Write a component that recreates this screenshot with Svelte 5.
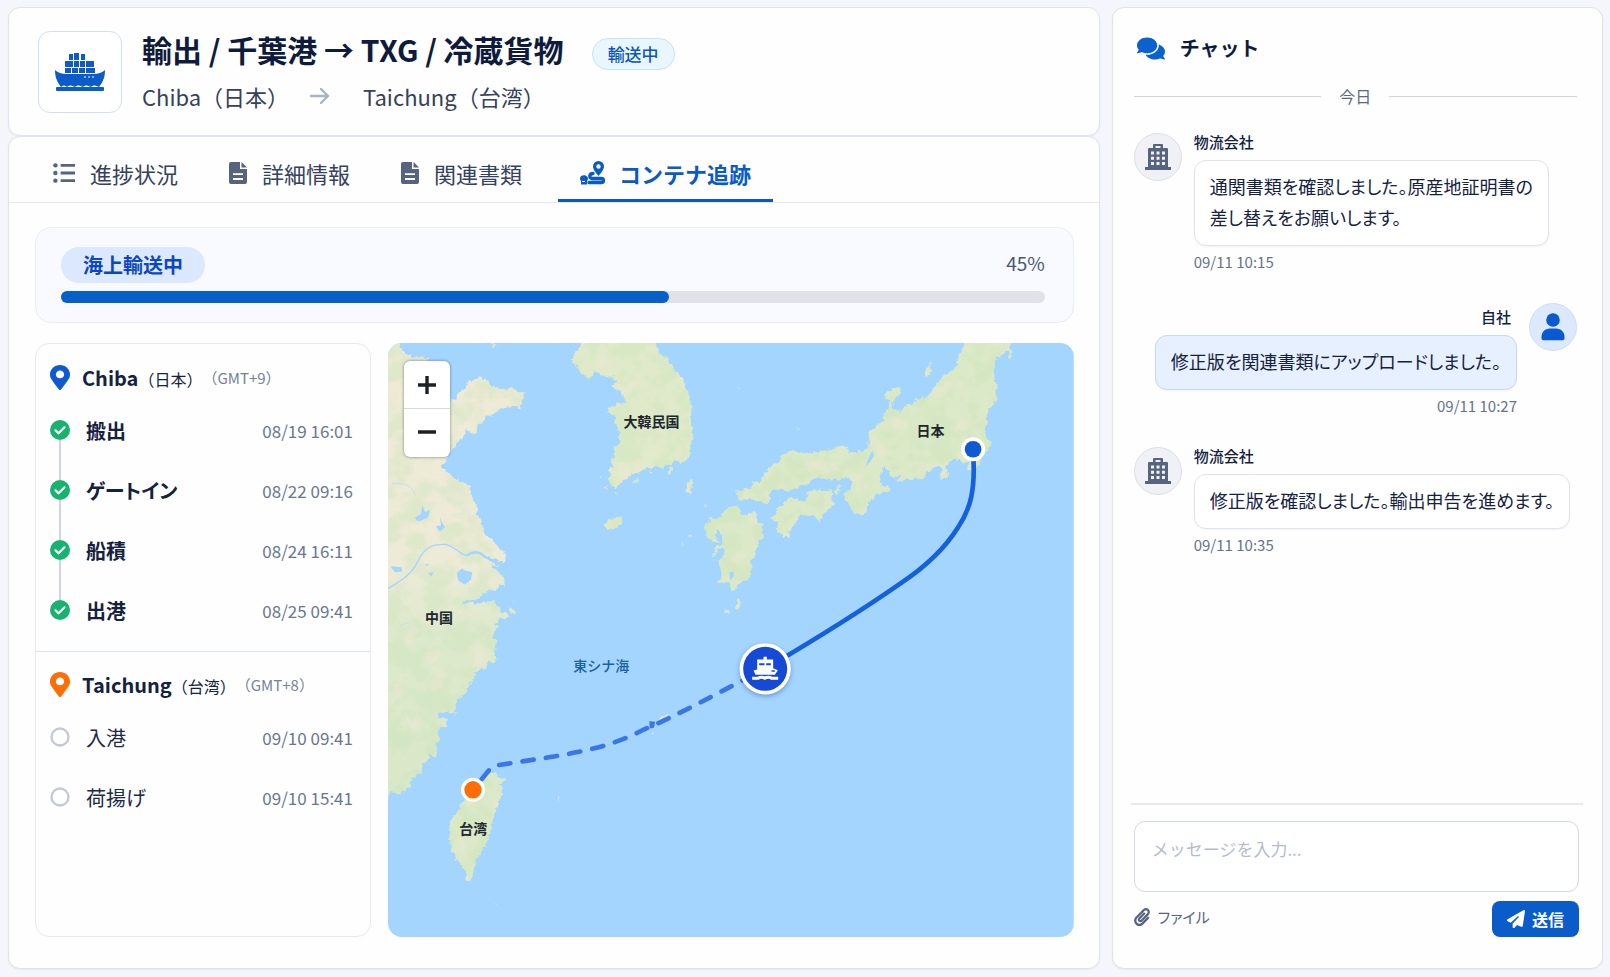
<script>
  let message = '';
  let activeTab = 'tracking';

  const progress = { label: '海上輸送中', text: '45%', width: 61.8 };

  const tabs = [
    { id: 'progress', label: '進捗状況', icon: 'list' },
    { id: 'detail', label: '詳細情報', icon: 'file' },
    { id: 'docs', label: '関連書類', icon: 'file' },
    { id: 'tracking', label: 'コンテナ追跡', icon: 'route' }
  ];

  const ports = [
    {
      name: 'Chiba',
      country: '（日本）',
      zone: '（GMT+9）',
      kind: 'origin',
      steps: [
        { label: '搬出', date: '08/19 16:01', done: true },
        { label: 'ゲートイン', date: '08/22 09:16', done: true },
        { label: '船積', date: '08/24 16:11', done: true },
        { label: '出港', date: '08/25 09:41', done: true }
      ]
    },
    {
      name: 'Taichung',
      country: '（台湾）',
      zone: '（GMT+8）',
      kind: 'destination',
      steps: [
        { label: '入港', date: '09/10 09:41', done: false },
        { label: '荷揚げ', date: '09/10 15:41', done: false }
      ]
    }
  ];

  let messages = [
    { from: '物流会社', own: false, text: '通関書類を確認しました。原産地証明書の\n差し替えをお願いします。', time: '09/11 10:15' },
    { from: '自社', own: true, text: '修正版を関連書類にアップロードしました。', time: '09/11 10:27' },
    { from: '物流会社', own: false, text: '修正版を確認しました。輸出申告を進めます。', time: '09/11 10:35' }
  ];

  function stamp() {
    const d = new Date();
    const p = (n) => String(n).padStart(2, '0');
    return `${p(d.getMonth() + 1)}/${p(d.getDate())} ${p(d.getHours())}:${p(d.getMinutes())}`;
  }

  function onSend() {
    const text = message.trim();
    if (!text) return;
    messages = [...messages, { from: '自社', own: true, text, time: stamp() }];
    message = '';
  }
</script>

<div class="page">
  <main class="main">
    <header class="card head">
      <div class="ship-box">
        <svg width="52" height="38" viewBox="0 0 52 38" aria-hidden="true">
          <g fill="#0b5cc8">
            <path d="M15 1h4v6h-4zM20 0h5v7h-5zM27 1h4v6h-4z" />
            <path d="M11 8h8v6h-8zM20 8h5v6h-5zM26 8h5v6h-5zM32 8h8v6h-8z" />
            <path d="M11 15h6v5h-6zM18 15h6v5h-6zM25 15h6v5h-6zM32 15h9v5h-9z" />
            <path d="M1 17q4 4 12 4h26q8 0 12-4c0 7-2 12-6 17-3-2-6-2-8 0-3-2-6-2-8 0-3-2-6-2-8 0-3-2-6-2-8 0-2-2-4-2-6 0C3 29 1 24 1 17z" />
            <rect x="2" y="34" width="48" height="4" rx="1" />
          </g>
          <path d="M30 24h2M34 24h2M38 24h2" stroke="#fff" stroke-width="1" />
        </svg>
      </div>
      <div class="head-text">
        <div class="title-row">
          <h1>輸出 / 千葉港 → TXG / 冷蔵貨物</h1>
          <span class="status">輸送中</span>
        </div>
        <p class="route">
          <span>Chiba（日本）</span>
          <svg width="22" height="20" viewBox="0 0 22 20" aria-hidden="true">
            <path d="M2 10h17M12 3l7 7-7 7" fill="none" stroke="#a9b3c4" stroke-width="2.4" stroke-linecap="round" stroke-linejoin="round" />
          </svg>
          <span>Taichung（台湾）</span>
        </p>
      </div>
    </header>

    <section class="card panel">
      <nav class="tabs">
        {#each tabs as tab}
          <button class="tab" class:active={activeTab === tab.id} on:click={() => (activeTab = tab.id)}>
            {#if tab.icon === 'list'}
              <svg width="23" height="22" viewBox="0 0 24 22" fill="currentColor" aria-hidden="true">
                <circle cx="2.5" cy="3" r="2.3" /><circle cx="2.5" cy="11" r="2.3" /><circle cx="2.5" cy="19" r="2.3" />
                <path d="M8 1.5h15v3H8zM8 9.500h15v3H8zM8 17.500h15v3H8z" />
              </svg>
            {:else if tab.icon === 'file'}
              <svg width="20" height="24" viewBox="0 0 20 24" aria-hidden="true">
                <path d="M3 1h9v7h7v13a2 2 0 0 1-2 2H3a2 2 0 0 1-2-2V3a2 2 0 0 1 2-2z" fill="currentColor" />
                <path d="M13.5 1l5.5 5.5h-5.500z" fill="currentColor" />
                <path d="M5 13.2h10M5 18h10" stroke="#fff" stroke-width="1.8" />
              </svg>
            {:else}
              <svg width="25" height="24" viewBox="0 0 25 24" aria-hidden="true">
                <path d="M18.5 0a5.5 5.5 0 0 1 5.5 5.5c0 3-3 6.5-5.5 9.5-2.5-3-5.5-6.5-5.5-9.5A5.5 5.5 0 0 1 18.5 0zm0 3.3a2.2 2.2 0 1 0 0 4.4 2.2 2.2 0 0 0 0-4.400z" fill="currentColor" fill-rule="evenodd" />
                <path d="M0 17.5c0-3 5-4.500 7.500-1.500 1 1.500.5 3-.5 4v3.500H1V20c-.6-.6-1-1.500-1-2.500z" fill="currentColor" />
                <path d="M9 21.500h12.500a2 2 0 0 0 0-4H12c-3 0-3-5 1-5" fill="none" stroke="currentColor" stroke-width="3.4" stroke-linecap="round" />
                <path d="M2 20.500h3" stroke="#fff" stroke-width="1" />
              </svg>
            {/if}
            {tab.label}
          </button>
        {/each}
      </nav>

      <div class="content">
        <div class="progress">
          <div class="progress-head">
            <span class="phase">{progress.label}</span>
            <span class="percent">{progress.text}</span>
          </div>
          <div class="track">
            <div class="fill" style="width: {progress.width}%"></div>
          </div>
        </div>

        <div class="columns">
          <div class="ports">
            {#each ports as port}
              <section class="port">
                <h2>
                  <svg class={port.kind} width="20" height="25" viewBox="0 0 384 512" preserveAspectRatio="none" aria-hidden="true">
                    <path fill="currentColor" d="M172.268 501.67C26.97 291.031 0 269.413 0 192 0 85.961 85.961 0 192 0s192 85.961 192 192c0 77.413-26.97 99.031-172.268 309.67-9.535 13.774-29.93 13.773-39.464 0zM192 272c44.183 0 80-35.817 80-80s-35.817-80-80-80-80 35.817-80 80 35.817 80 80 80z" />
                  </svg>
                  <span>{port.name}<span class="country">{port.country}</span></span>
                  <span class="zone">{port.zone}</span>
                </h2>
                <ol>
                  {#each port.steps as step}
                    <li class:done={step.done}>
                      <svg class="dot" width="20" height="20" viewBox="0 0 20 20" aria-hidden="true">
                        {#if step.done}
                          <circle cx="10" cy="10" r="10" fill="#17b26f" />
                          <path d="M5.500 10.300l3 3 6-6" fill="none" stroke="#fff" stroke-width="2.200" stroke-linecap="round" stroke-linejoin="round" />
                        {:else}
                          <circle cx="10" cy="10" r="8.500" fill="#fff" stroke="#c3c9d6" stroke-width="2.400" />
                        {/if}
                      </svg>
                      <span class="step">{step.label}</span>
                      <time>{step.date}</time>
                    </li>
                  {/each}
                </ol>
              </section>
            {/each}
          </div>

          <div class="map">
            <svg class="chart" viewBox="0 0 2058 1785" preserveAspectRatio="xMidYMid slice" role="img" aria-label="航路地図">
              <defs>
                <filter id="terrain" x="-2%" y="-2%" width="104%" height="104%" color-interpolation-filters="sRGB">
                  <feTurbulence type="fractalNoise" baseFrequency="0.07" numOctaves="3" seed="4" result="rough" />
                  <feDisplacementMap in="SourceGraphic" in2="rough" scale="18" xChannelSelector="R" yChannelSelector="G" result="land" />
                  <feTurbulence type="fractalNoise" baseFrequency="0.016" numOctaves="4" seed="11" result="noise" />
                  <feColorMatrix in="noise" type="matrix" values="0 0 0 0 0.78  0 0 0 0 0.89  0 0 0 0 0.72  5 0 0 0 -2" result="woods" />
                  <feComposite in="woods" in2="land" operator="in" result="woodsOnLand" />
                  <feComponentTransfer in="woodsOnLand" result="softWoods"><feFuncA type="linear" slope="0.35" /></feComponentTransfer>
                  <feColorMatrix in="noise" type="matrix" values="0 0 0 0 0.93  0 0 0 0 0.91  0 0 0 0 0.83  0 0 7 0 -4.1" result="fields" />
                  <feComposite in="fields" in2="land" operator="in" result="fieldsOnLand" />
                  <feComponentTransfer in="fieldsOnLand" result="softFields"><feFuncA type="linear" slope="0.5" /></feComponentTransfer>
                  <feMerge><feMergeNode in="land" /><feMergeNode in="softWoods" /><feMergeNode in="softFields" /></feMerge>
                </filter>
                <linearGradient id="mainland" x1="0" y1="0" x2="0" y2="1">
                  <stop offset="0" stop-color="#eeead6" />
                  <stop offset="0.5" stop-color="#edebd7" />
                  <stop offset="0.64" stop-color="#dde9cc" />
                  <stop offset="1" stop-color="#d9e8c8" />
                </linearGradient>
              </defs>
              <rect width="2058" height="1785" fill="#a3d5ff" />

              <!-- China and Korea -->
              <g transform="translate(-9 -21)" filter="url(#terrain)">
                <path fill="url(#mainland)" d="M-20 0 45 25 50 42 62 48 70 58 95 66 115 62 130 68 100 110 120 160 180 200 196 195 215 188 217 175 243 158 245 140 262 135 285 124 305 135 320 150 350 160 385 157 400 170 423 170 415 190 405 205 408 221 385 210 345 222 325 238 305 242 290 262 280 270 275 290 262 294 237 282 245 292 215 325 200 345 185 365 185 378 172 388 172 400 190 412 205 430 235 440 255 455 262 480 272 505 280 540 295 570 297 597 325 612 335 632 355 645 362 665 360 683 310 660 300 668 345 692 318 690 345 712 358 728 362 745 345 750 320 765 295 775 275 792 245 795 228 808 262 798 275 810 300 798 325 797 345 815 352 830 375 838 365 848 345 850 330 870 345 874 328 890 322 905 335 912 328 945 335 978 310 975 303 1003 288 998 272 1012 262 1035 245 1058 248 1070 222 1090 208 1115 212 1135 190 1128 160 1135 165 1148 188 1150 185 1175 165 1172 160 1190 162 1220 148 1222 155 1240 150 1262 130 1255 132 1272 110 1285 110 1310 85 1325 72 1340 75 1352 60 1368 35 1380 22 1362 10 1385 -20 1385Z" />
                <path fill="#e0eaca" d="M585 0 590 32 570 52 560 80 575 90 590 112 612 128 628 120 622 104 655 118 680 125 697 135 684 155 700 160 715 180 720 205 692 200 690 212 668 215 670 230 690 238 692 270 705 290 700 310 712 318 690 335 690 355 678 378 685 395 668 405 680 420 665 430 692 458 705 440 725 432 740 415 765 410 785 395 800 400 812 390 835 400 838 388 858 388 868 375 885 383 905 378 918 355 915 330 928 300 918 265 920 215 912 175 895 135 870 105 845 68 820 50 805 0Z" />
                <path fill="#e0e9c4" d="M658 572 665 555 690 545 712 548 712 562 695 575 670 582ZM912 432 924 432 915 475 905 470ZM742 445 752 430 765 426 756 442ZM856 392 862 395 857 415 852 412ZM372 810 395 832 390 835 370 822ZM384 795 390 798 386 802ZM318 22 342 22 325 34ZM910 596 920 600 912 606ZM890 620 898 622 892 630Z" />
                <path fill="#e0e9c4" d="M645 425 651 428 648 433ZM655 455 672 448 662 462ZM692 472 698 472 696 478ZM790 405 800 412 793 416ZM960 507 966 510 962 515Z" />
              </g>
              <!-- lakes and the Yangtze -->
              <g transform="translate(-9 -21)">
                <path fill="#a3d5ff" d="M90 545 108 535 112 508 120 530 135 522 130 545 105 556 95 555ZM165 545 172 562 180 575 165 588 152 572 168 570ZM215 712 232 698 240 705 262 710 258 732 240 748 220 735ZM16 692 50 695 52 708 30 710ZM130 712 146 710 138 724ZM118 690 128 684 130 690Z" />
                <path fill="none" stroke="#a3d5ff" stroke-width="4" d="M8 760C40 740 80 720 98 678 120 630 150 625 185 627 215 635 220 655 245 660" />
                <path fill="none" stroke="#a3d5ff" stroke-width="7" d="M245 660C270 645 285 648 300 664L350 690" />
                <path fill="none" stroke="#c4e0e6" stroke-width="3" d="M20 445C60 440 80 450 92 480M45 870l30-10" />
              </g>

              <!-- Japan -->
              <g transform="translate(936 -21)">
                <g fill="#dce9c8" filter="url(#terrain)">
                  <path d="M792 0 790 35 775 60 772 90 745 115 730 118 715 140 690 175 665 190 645 195 640 205 610 212 610 228 590 228 575 212 580 200 605 165 605 155 580 160 558 175 556 190 568 198 565 215 552 240 552 255 530 270 512 285 503 300 508 322 495 342 480 350 445 350 445 330 405 338 375 348 310 352 285 345 262 350 248 358 245 368 225 385 200 410 180 435 160 440 150 458 112 468 120 498 145 490 180 495 200 505 210 492 205 475 225 462 275 465 300 452 325 450 330 435 355 425 395 435 440 425 457 432 455 450 437 475 432 492 445 500 455 525 487 542 500 530 502 510 520 490 525 478 568 465 565 452 545 448 540 430 545 400 555 395 575 425 605 420 590 438 640 430 670 432 685 408 715 388 725 395 725 433 742 425 745 405 735 398 755 375 780 370 790 380 805 375 803 400 815 405 840 385 845 365 875 328 862 300 855 280 862 255 868 225 890 190 890 150 880 115 888 68 925 48 930 68 938 65 932 40 935 0Z" />
                  <path d="M205 550 225 540 235 515 255 500 265 485 310 497 322 485 325 470 345 460 400 465 392 485 403 505 370 535 360 560 345 540 300 535 295 555 268 590 270 607 247 607 250 595 232 590 232 565 222 548Z" />
                  <path d="M85 515 112 507 122 532 145 540 155 530 170 532 172 560 187 570 192 600 175 622 165 650 152 685 155 700 148 730 125 738 110 760 95 770 90 738 60 745 55 738 68 725 62 700 55 675 68 670 78 640 52 640 45 662 40 655 50 632 72 625 60 590 52 578 48 600 58 622 38 622 22 600 12 572 30 560 28 548 65 545 72 530Z" />
                  <path d="M680 100 695 75 690 95 698 100 685 125 675 122ZM420 445 426 455 412 475 404 470ZM116 790 123 800 113 825 107 820ZM75 826 90 824 84 832ZM288 276 296 278 292 284ZM112 156 124 158 116 162ZM14 507 20 510 16 515ZM240 490 246 494 240 498Z" />
                </g>
                <path fill="#a3d5ff" d="M517 345 523 360 512 378 498 393 506 368ZM88 712 100 708 103 720 92 735Z" />
              </g>

              <!-- Taiwan -->
              <g transform="translate(-9 774)" filter="url(#terrain)">
                <path fill="#dce9c8" d="M318 515 330 522 360 540 345 555 355 580 340 605 325 650 318 690 308 720 290 758 280 762 268 800 260 840 245 842 243 812 220 785 200 750 200 730 188 718 195 695 195 665 220 630 222 615 250 590 265 550 295 530Z" />
                <path fill="#dde7cd" d="M820 356 845 342 852 348 825 362ZM803 396 809 400 804 404ZM500 597 506 597 503 602ZM522 590 528 592 524 596ZM331 905 337 908 332 912ZM1018 28 1036 30 1026 38Z" />
              </g>

              <path d="M1756 330C1764 440 1748 500 1711 554 1670 620 1610 675 1536 724 1430 798 1300 880 1132 979" fill="none" stroke="#1560dc" stroke-width="14" />
              <path d="M255 1342 313 1271C500 1240 640 1230 766 1162 900 1104 1010 1040 1132 979" fill="none" stroke="#3a76e8" stroke-width="14" stroke-linecap="round" stroke-dasharray="34 37" stroke-dashoffset="30" />
              <path d="M784 1136l18 2-4 18-12 2z" fill="#3a76e8" />

              <g class="place">
                <text x="791" y="253">大韓民国</text>
                <text x="153" y="841">中国</text>
                <text x="1628" y="279">日本</text>
                <text x="256" y="1476">台湾</text>
                <text class="sea" x="640" y="987">東シナ海</text>
              </g>

              <circle cx="1756" cy="320" r="36" fill="#fff" />
              <circle cx="1756" cy="320" r="25" fill="#0e5ad2" />
              <circle cx="255" cy="1342" r="36" fill="#fff" />
              <circle cx="255" cy="1342" r="26" fill="#ff6d05" />

              <g class="vessel" transform="translate(1132 979)">
                <circle r="77" fill="#fff" />
                <circle r="66" fill="#1549d6" />
                <path fill="#fff" fill-rule="evenodd" d="M-5-36H5v8H24v26l14 6-9 14H-29L-35 5l11-3V-28H-5zM-18-17v6H-2v-6zM3-17v6H17v-6zM19 4v5h10V4z" />
                <path fill="none" stroke="#fff" stroke-width="9" d="M-39 28h18q9-6 20 0 10-6 20 0h20" />
              </g>
            </svg>

            <div class="zoom">
              <button aria-label="拡大">
                <svg width="20" height="20" viewBox="0 0 20 20"><path d="M10 1v18M1 10h18" stroke="#1c1f24" stroke-width="3.400" /></svg>
              </button>
              <button aria-label="縮小">
                <svg width="20" height="20" viewBox="0 0 20 20"><path d="M1 10h18" stroke="#1c1f24" stroke-width="3.400" /></svg>
              </button>
            </div>
          </div>
        </div>
      </div>
    </section>
  </main>

  <aside class="card chat">
    <h2 class="chat-title">
      <svg width="28" height="25" viewBox="0 0 576 512" aria-hidden="true">
        <path fill="#0b62cf" d="M416 192c0-88.400-93.100-160-208-160S0 103.600 0 192c0 34.300 14.100 65.900 38 92-13.400 30.200-35.500 54.200-35.800 54.500-2.200 2.300-2.800 5.700-1.500 8.700S4.800 352 8 352c36.600 0 66.900-12.300 88.700-25 32.200 15.700 70.300 25 111.300 25 114.900 0 208-71.600 208-160zm122 220c23.900-26 38-57.700 38-92 0-66.900-53.500-124.200-129.300-148.100.9 6.600 1.300 13.300 1.300 20.100 0 105.900-107.700 192-240 192-10.800 0-21.300-.8-31.700-1.900C207.800 439.600 281.800 480 368 480c41 0 79.100-9.200 111.300-25 21.800 12.700 52.100 25 88.700 25 3.200 0 6.100-1.900 7.300-4.800 1.300-2.900.7-6.300-1.500-8.700-.3-.3-22.400-24.200-35.800-54.500z" />
      </svg>
      チャット
    </h2>
    <div class="day"><span>今日</span></div>

    <div class="messages">
      {#each messages as msg}
        <article class="message" class:own={msg.own}>
          <div class="avatar">
            {#if msg.own}
              <svg width="24" height="28" viewBox="0 0 24 28" fill="#0b59d0" aria-hidden="true">
                <circle cx="12" cy="7" r="6.800" />
                <path d="M9 15.500h6c5 0 8.500 3.500 8.500 8.500v1.500a1.800 1.800 0 0 1-1.800 1.800H2.300A1.800 1.800 0 0 1 .5 25.500V24c0-5 3.500-8.500 8.500-8.500z" />
              </svg>
            {:else}
              <svg width="26" height="26" viewBox="0 0 26 26" aria-hidden="true">
                <path d="M9 0h8a1 1 0 0 1 1 1v3h4a1 1 0 0 1 1 1v18h3v3H0v-3h3V5a1 1 0 0 1 1-1h4V1a1 1 0 0 1 1-1zm1.500 2v2h5V2z" fill="#56647f" fill-rule="evenodd" />
                <path d="M6 7.500h3v3H6zM11.500 7.500h3v3h-3zM17 7.500h3v3h-3zM6 12.700h3v3H6zM11.500 12.700h3v3h-3zM17 12.700h3v3h-3zM6 18h3v3H6zM11.500 18h3v3h-3zM17 18h3v3h-3z" fill="#f2f4f8" />
              </svg>
            {/if}
          </div>
          <div class="body">
            <div class="from">{msg.from}</div>
            <p class="bubble">{msg.text}</p>
            <time>{msg.time}</time>
          </div>
        </article>
      {/each}
    </div>

    <form class="composer" on:submit|preventDefault={onSend}>
      <textarea aria-label="メッセージ" placeholder="メッセージを入力..." bind:value={message}></textarea>
      <div class="actions">
        <button type="button" class="attach">
          <svg width="16" height="18" viewBox="0 0 448 512" aria-hidden="true">
            <path fill="currentColor" d="M43.246 466.142c-58.430-60.289-57.341-157.511 1.386-217.581L254.392 34c44.316-45.332 116.351-45.336 160.671 0 43.890 44.894 43.943 117.329 0 162.276L232.214 383.128c-29.855 30.537-78.633 30.111-107.982-.998-28.275-29.970-27.368-77.473 1.452-106.953l143.743-146.835c6.182-6.314 16.312-6.422 22.626-.241l22.861 22.379c6.315 6.182 6.422 16.312.241 22.626L171.427 319.927c-4.932 5.045-5.236 13.428-.648 18.292 4.372 4.634 11.245 4.711 15.688.165l182.849-186.851c19.613-20.062 19.613-52.725-.011-72.798-19.189-19.627-49.957-19.637-69.154 0L90.390 293.295c-34.763 35.560-35.299 93.120-1.191 128.313 34.010 35.093 88.985 35.137 123.058.286l172.060-175.999c6.177-6.319 16.307-6.433 22.626-.256l22.877 22.364c6.319 6.177 6.434 16.307.256 22.626l-172.060 175.998c-59.576 60.938-155.943 60.216-214.770-.485z" />
          </svg>
          ファイル
        </button>
        <button type="submit" class="send">
          <svg width="18" height="18" viewBox="0 0 512 512" aria-hidden="true">
            <path fill="currentColor" d="M498.100 5.600c10.100 7 15.400 19.100 13.500 31.200l-64 416c-1.500 9.700-7.400 18.200-16 23s-18.900 5.400-28 1.600L284 427.700l-68.500 74.100c-8.900 9.700-22.900 12.900-35.200 8.100S160 493.200 160 480V396.400c0-4 1.500-7.800 4.200-10.700L331.800 202.800c5.800-6.300 5.600-16-.4-22s-15.700-6.400-22-.7L106 360.800 17.700 316.600C7.100 311.300.3 300.700 0 288.900s5.900-22.800 16.100-28.700l448-256c10.700-6.100 23.900-5.500 34 1.400z" />
          </svg>
          送信
        </button>
      </div>
    </form>
  </aside>
</div>

<style>
  :global(body) {
    background: #f4f6fb;
    font-family: "Noto Sans CJK JP", "Noto Sans", sans-serif;
    color: #14213f;
  }
  * { box-sizing: border-box; }
  h1, h2, p, ol { margin: 0; padding: 0; }
  svg { display: block; flex: none; }
  button {
    font: inherit;
    color: inherit;
    border: none;
    background: none;
    padding: 0;
    cursor: pointer;
  }
  .page {
    display: grid;
    grid-template-columns: minmax(0, 20fr) minmax(440px, 9fr);
    gap: 12px;
    min-height: 100vh;
    padding: 7px 7px 8px 8px;
  }
  .main {
    display: flex;
    flex-direction: column;
    min-width: 0;
  }
  .card {
    background: #fefefe;
    border: 1px solid #dfe3ec;
    border-radius: 12px;
    box-shadow: 0 1px 2px rgba(30, 50, 90, 0.06);
  }

  /* header */
  .head {
    display: flex;
    gap: 20px;
    padding: 23px 29px 22px;
  }
  .ship-box {
    display: flex;
    align-items: center;
    justify-content: center;
    width: 84px;
    height: 82px;
    border: 1px solid #cfdffb;
    border-radius: 12px;
    background: #fff;
  }
  .title-row {
    display: flex;
    align-items: flex-start;
    gap: 28px;
  }
  h1 {
    font-size: 30px;
    line-height: 36px;
    font-weight: 700;
    color: #0e1b3d;
  }
  .status {
    margin-top: 7px;
    padding: 0 15px;
    border: 1px solid #c5e5fb;
    border-radius: 16px;
    background: #e9f6fe;
    color: #0a57b5;
    font-size: 17px;
    line-height: 30px;
    font-weight: 500;
  }
  .route {
    display: flex;
    align-items: center;
    margin-top: 10px;
    font-size: 22px;
    line-height: 32px;
    color: #35415d;
  }
  .route svg { margin: 0 32px 0 20px; }

  /* tabs */
  .panel {
    flex: 1;
    display: flex;
    flex-direction: column;
  }
  .tabs {
    display: flex;
    gap: 6px;
    padding: 0 22px;
    border-bottom: 1px solid #e6e9f2;
  }
  .tab {
    display: flex;
    align-items: center;
    gap: 14px;
    height: 65px;
    padding: 10px 22px 0;
    border-bottom: 3px solid transparent;
    font-size: 22px;
    line-height: 32px;
    color: #35415d;
  }
  .tab:last-child { margin-left: 8px; }
  .tab svg { color: #56647f; }
  .tab.active {
    color: #0a5bc4;
    border-color: #0a56cc;
    font-weight: 700;
  }
  .tab.active svg { color: #0a5bc4; }

  /* tracking */
  .content {
    flex: 1;
    display: flex;
    flex-direction: column;
    gap: 20px;
    padding: 24px 25px 31px 26px;
  }
  .progress {
    padding: 19px 28px 19px 25px;
    border: 1px solid #e9edf7;
    border-radius: 16px;
    background: #f8faff;
  }
  .progress-head {
    display: flex;
    align-items: center;
    justify-content: space-between;
  }
  .phase {
    padding: 0 22px;
    border-radius: 18px;
    background: #dce8fd;
    color: #0d47bd;
    font-size: 20px;
    line-height: 36px;
    font-weight: 700;
  }
  .percent {
    padding-bottom: 4px;
    font-size: 19px;
    line-height: 32px;
    color: #4a5672;
  }
  .track {
    height: 12px;
    margin-top: 8px;
    border-radius: 6px;
    background: #dfe2e9;
  }
  .fill {
    height: 100%;
    border-radius: 6px;
    background: #075fca;
  }
  .columns {
    flex: 1;
    display: grid;
    grid-template-columns: 336px minmax(0, 1fr);
    gap: 17px;
  }
  .ports {
    border: 1px solid #e6e9f2;
    border-radius: 14px;
  }
  .port { padding: 10px 17px 11px 14px; }
  .port + .port {
    padding-top: 9px;
    border-top: 1px solid #dfe3ec;
  }
  .port h2 {
    display: flex;
    align-items: center;
    height: 46px;
    font-size: 20px;
    font-weight: 700;
    color: #14213f;
  }
  .port h2 svg { margin-right: 12px; }
  .origin { color: #0e5ad2; }
  .destination { color: #ff6d05; }
  .country {
    font-size: 16px;
    font-weight: 400;
  }
  .zone {
    font-size: 15px;
    font-weight: 400;
    color: #76819a;
  }
  ol { list-style: none; }
  li {
    position: relative;
    display: flex;
    align-items: center;
    gap: 16px;
    height: 60px;
  }
  /* line between two finished steps */
  li.done:not(:last-child)::after {
    content: '';
    position: absolute;
    left: 9px;
    top: 40px;
    width: 2px;
    height: 40px;
    background: #d0d4dc;
  }
  .step {
    flex: 1;
    font-size: 20px;
    font-feature-settings: "palt";
    color: #1c2947;
  }
  .done .step {
    font-weight: 700;
    color: #14213f;
  }
  li time {
    font-size: 17px;
    color: #6b7690;
  }

  /* map */
  .map {
    position: relative;
    min-height: 420px;
    border-radius: 14px;
    overflow: hidden;
  }
  .chart {
    position: absolute;
    inset: 0;
    width: 100%;
    height: 100%;
  }
  .place text {
    font-size: 42px;
    font-weight: 700;
    text-anchor: middle;
    fill: #20262e;
  }
  .place .sea {
    font-weight: 500;
    fill: #1c5f9e;
  }
  .vessel { filter: drop-shadow(0 6px 8px rgba(20, 50, 110, 0.35)); }
  .zoom {
    position: absolute;
    left: 16px;
    top: 18px;
    display: flex;
    flex-direction: column;
    width: 46px;
    padding-bottom: 2px;
    border-radius: 6px;
    background: #fff;
    box-shadow: 0 0 3px rgba(40, 50, 70, 0.6);
  }
  .zoom button {
    display: flex;
    align-items: center;
    justify-content: center;
    height: 47px;
  }
  .zoom button + button { border-top: 1px solid #d5d9e2; }

  /* chat */
  .chat {
    display: flex;
    flex-direction: column;
    padding: 24px 25px 31px 21px;
  }
  .chat-title {
    display: flex;
    align-items: center;
    gap: 15px;
    padding-left: 3px;
    font-size: 20px;
    line-height: 32px;
    font-weight: 700;
    color: #0e1b3d;
  }
  .day {
    display: flex;
    align-items: center;
    gap: 18px;
    margin: 20px 0 25px;
    font-size: 16px;
    line-height: 24px;
    color: #5c6881;
  }
  .day::before,
  .day::after {
    content: '';
    flex: 1;
    height: 1px;
    background: #cdd4e2;
  }
  .messages {
    flex: 1;
    display: flex;
    flex-direction: column;
    gap: 31px;
  }
  .message {
    display: flex;
    align-items: flex-start;
    gap: 12px;
  }
  .message.own { flex-direction: row-reverse; }
  .avatar {
    display: flex;
    align-items: center;
    justify-content: center;
    flex: none;
    width: 48px;
    height: 48px;
    border: 1px solid #dcdfe8;
    border-radius: 50%;
    background: #f0f1f5;
  }
  .own .avatar {
    border-color: #cfdffb;
    background: #dce9fd;
  }
  .body {
    display: flex;
    flex-direction: column;
    align-items: flex-start;
    min-width: 0;
  }
  .own .body {
    align-items: flex-end;
    padding-top: 5px;
  }
  .from {
    font-size: 15px;
    line-height: 18px;
    font-weight: 500;
  }
  .own .from { padding-right: 6px; }
  .bubble {
    margin: 9px 0 6px;
    padding: 10px 15px 12px;
    border: 1px solid #e0e3ed;
    border-radius: 12px;
    background: #fff;
    box-shadow: 0 1px 2px rgba(30, 50, 90, 0.06);
    font-size: 18px;
    line-height: 31px;
    font-feature-settings: "palt";
    white-space: pre-line;
  }
  .own .bubble {
    border-color: #c3dafc;
    background: #e6f0fe;
  }
  .message time {
    font-size: 15px;
    line-height: 20px;
    color: #66728c;
  }

  /* composer */
  .composer {
    margin: 0 -6px 0 -3px;
    padding: 16px 4px 0 3px;
    border-top: 2px solid #e6e9f2;
  }
  textarea {
    display: block;
    width: 100%;
    height: 71px;
    padding: 11px 17px;
    border: 1px solid #d5d9e6;
    border-radius: 11px;
    background: #fff;
    font: inherit;
    font-size: 17px;
    line-height: 31px;
    color: inherit;
    resize: none;
  }
  textarea::placeholder { color: #b5bccb; }
  .actions {
    display: flex;
    justify-content: space-between;
    align-items: flex-start;
    margin-top: 9px;
  }
  .attach {
    display: flex;
    align-items: center;
    gap: 8px;
    font-size: 15px;
    line-height: 32px;
    font-feature-settings: "palt";
    color: #56647f;
  }
  .send {
    display: flex;
    align-items: center;
    gap: 7px;
    height: 36px;
    padding: 0 15px;
    border-radius: 8px;
    background: #0a5ccb;
    color: #fff;
    font-size: 16px;
    font-weight: 700;
  }
</style>
